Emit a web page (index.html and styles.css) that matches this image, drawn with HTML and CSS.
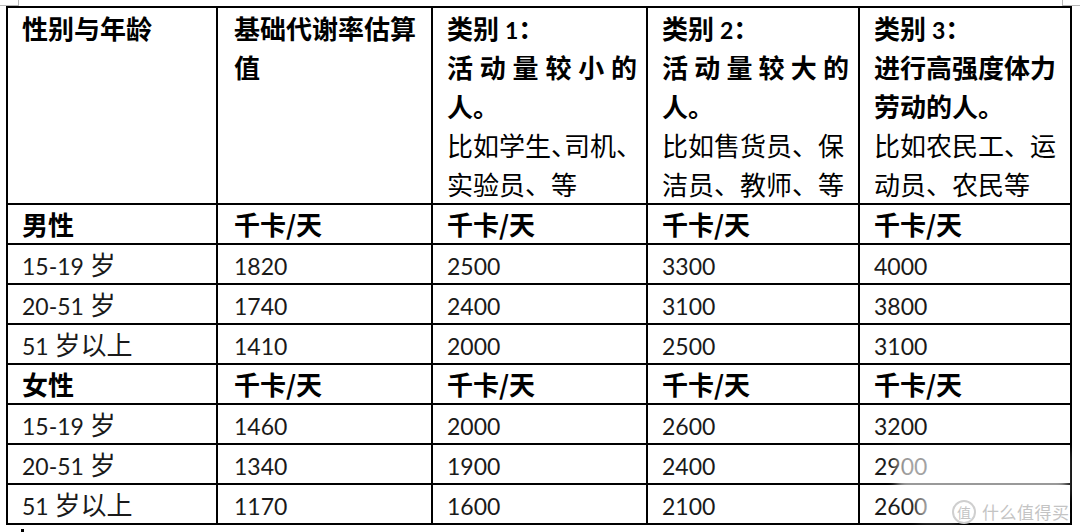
FILE: index.html
```html
<!DOCTYPE html>
<html lang="zh-CN">
<head>
<meta charset="utf-8">
<title>基础代谢率估算</title>
<link rel="stylesheet" href="styles.css">
</head>
<body>
<div class="page">
  <span class="handle handle-l"></span>
  <span class="handle handle-r"></span>
  <table class="t">
    <colgroup>
      <col class="c1"><col class="c2"><col class="c3"><col class="c4"><col class="c5">
    </colgroup>
    <tr class="head">
      <td><div class="ln b">性别与年龄</div></td>
      <td class="p2"><div class="ln b">基础代谢率估算</div><div class="ln b">值</div></td>
      <td>
        <div class="ln b">类别 <span class="n">1</span>：</div>
        <div class="ln b just">活动量较小的</div>
        <div class="ln b">人。</div>
        <div class="ln">比如学生<span class="hp">、</span>司机<span class="hp">、</span></div>
        <div class="ln last">实验员、等</div>
      </td>
      <td>
        <div class="ln b">类别 <span class="n">2</span>：</div>
        <div class="ln b just">活动量较大的</div>
        <div class="ln b">人。</div>
        <div class="ln">比如售货员、保</div>
        <div class="ln last">洁员、教师、等</div>
      </td>
      <td>
        <div class="ln b">类别 <span class="n">3</span>：</div>
        <div class="ln b">进行高强度体力</div>
        <div class="ln b">劳动的人。</div>
        <div class="ln">比如农民工、运</div>
        <div class="ln last">动员、农民等</div>
      </td>
    </tr>
    <tr class="sub">
      <td>男性</td><td class="p2">千卡/天</td><td>千卡/天</td><td>千卡/天</td><td>千卡/天</td>
    </tr>
    <tr class="row">
      <td><span class="n">15-19</span> 岁</td><td class="p2"><span class="n">1820</span></td><td><span class="n">2500</span></td><td><span class="n">3300</span></td><td><span class="n">4000</span></td>
    </tr>
    <tr class="row">
      <td><span class="n">20-51</span> 岁</td><td class="p2"><span class="n">1740</span></td><td><span class="n">2400</span></td><td><span class="n">3100</span></td><td><span class="n">3800</span></td>
    </tr>
    <tr class="row">
      <td><span class="n">51</span> 岁以上</td><td class="p2"><span class="n">1410</span></td><td><span class="n">2000</span></td><td><span class="n">2500</span></td><td><span class="n">3100</span></td>
    </tr>
    <tr class="sub">
      <td>女性</td><td class="p2">千卡/天</td><td>千卡/天</td><td>千卡/天</td><td>千卡/天</td>
    </tr>
    <tr class="row">
      <td><span class="n">15-19</span> 岁</td><td class="p2"><span class="n">1460</span></td><td><span class="n">2000</span></td><td><span class="n">2600</span></td><td><span class="n">3200</span></td>
    </tr>
    <tr class="row">
      <td><span class="n">20-51</span> 岁</td><td class="p2"><span class="n">1340</span></td><td><span class="n">1900</span></td><td><span class="n">2400</span></td><td><span class="n">2900</span></td>
    </tr>
    <tr class="row">
      <td><span class="n">51</span> 岁以上</td><td class="p2"><span class="n">1170</span></td><td><span class="n">1600</span></td><td><span class="n">2100</span></td><td><span class="n">2600</span></td>
    </tr>
  </table>
  <span class="caret"></span>
  <span class="smear smear-a"></span>
  <span class="smear smear-b"></span>
  <div class="wm"><span class="wm-logo">值</span><span class="wm-text">什么值得买</span></div>
</div>
</body>
</html>
```
FILE: styles.css
```css
html, body {
  margin: 0;
  padding: 0;
  background: #ffffff;
}

.page {
  position: relative;
  width: 1080px;
  height: 532px;
  overflow: hidden;
  padding-top: 6px;
  box-sizing: border-box;
  font-family: "Noto Sans CJK SC", "Noto Sans", sans-serif;
  color: #000;
}

.handle {
  position: absolute;
  top: 0;
  width: 18px;
  height: 5px;
  border-bottom: 1px solid #b8b8b8;
}
.handle-l { left: 0; border-right: 1px solid #b8b8b8; }
.handle-r { left: 1062px; border-left: 1px solid #b8b8b8; }

.t {
  margin-left: 6px;
  width: 1064px;
  border-collapse: collapse;
  table-layout: fixed;
}

.c1 { width: 210px; }
.c2 { width: 215px; }
.c3 { width: 215px; }
.c4 { width: 212px; }
.c5 { width: 212px; }

.t td {
  border: 2px solid #000;
  padding: 0 9px 0 14px;
  font-size: 26px;
  white-space: nowrap;
  overflow: hidden;
}

.t td.p2 { padding-left: 16px; }

.head td {
  vertical-align: top;
  padding-top: 0;
  height: 195px;
}

.ln {
  line-height: 39px;
  height: 39px;
  font-weight: 400;
}
.ln.b { font-weight: 700; }

.just {
  text-align: justify;
  text-align-last: justify;
  white-space: normal;
}

.hp { letter-spacing: -0.5em; }

.n {
  font-family: Lato, "Open Sans", sans-serif;
  font-size: 23px;
  line-height: 1;
}

.sub td {
  font-weight: 700;
  line-height: 38px;
  height: 38px;
  vertical-align: middle;
}

.row td {
  line-height: 38px;
  height: 38px;
  vertical-align: middle;
  color: #1a1a1a;
}

.caret {
  position: absolute;
  left: 21px;
  top: 529px;
  width: 3px;
  height: 3px;
  background: #000;
}

.smear {
  position: absolute;
  background: rgba(255, 255, 255, 0.6);
  filter: blur(5px);
}
.smear-a { left: 897px; top: 452px; width: 170px; height: 44px; }
.smear-b { left: 918px; top: 496px; width: 40px; height: 24px; }

.wm {
  position: absolute;
  left: 952px;
  top: 500px;
  display: flex;
  align-items: center;
  gap: 6px;
  color: #c4c4c4;
  text-shadow: 0 0 3px #fff, 0 0 3px #fff;
}

.wm-logo {
  width: 24px;
  height: 24px;
  border: 2px solid #cfcfcf;
  border-radius: 50%;
  box-sizing: border-box;
  display: flex;
  align-items: center;
  justify-content: center;
  font-size: 14px;
  line-height: 1;
  background: rgba(255, 255, 255, 0.6);
}

.wm-text {
  font-size: 17px;
  line-height: 24px;
  letter-spacing: 0.5px;
}
```
